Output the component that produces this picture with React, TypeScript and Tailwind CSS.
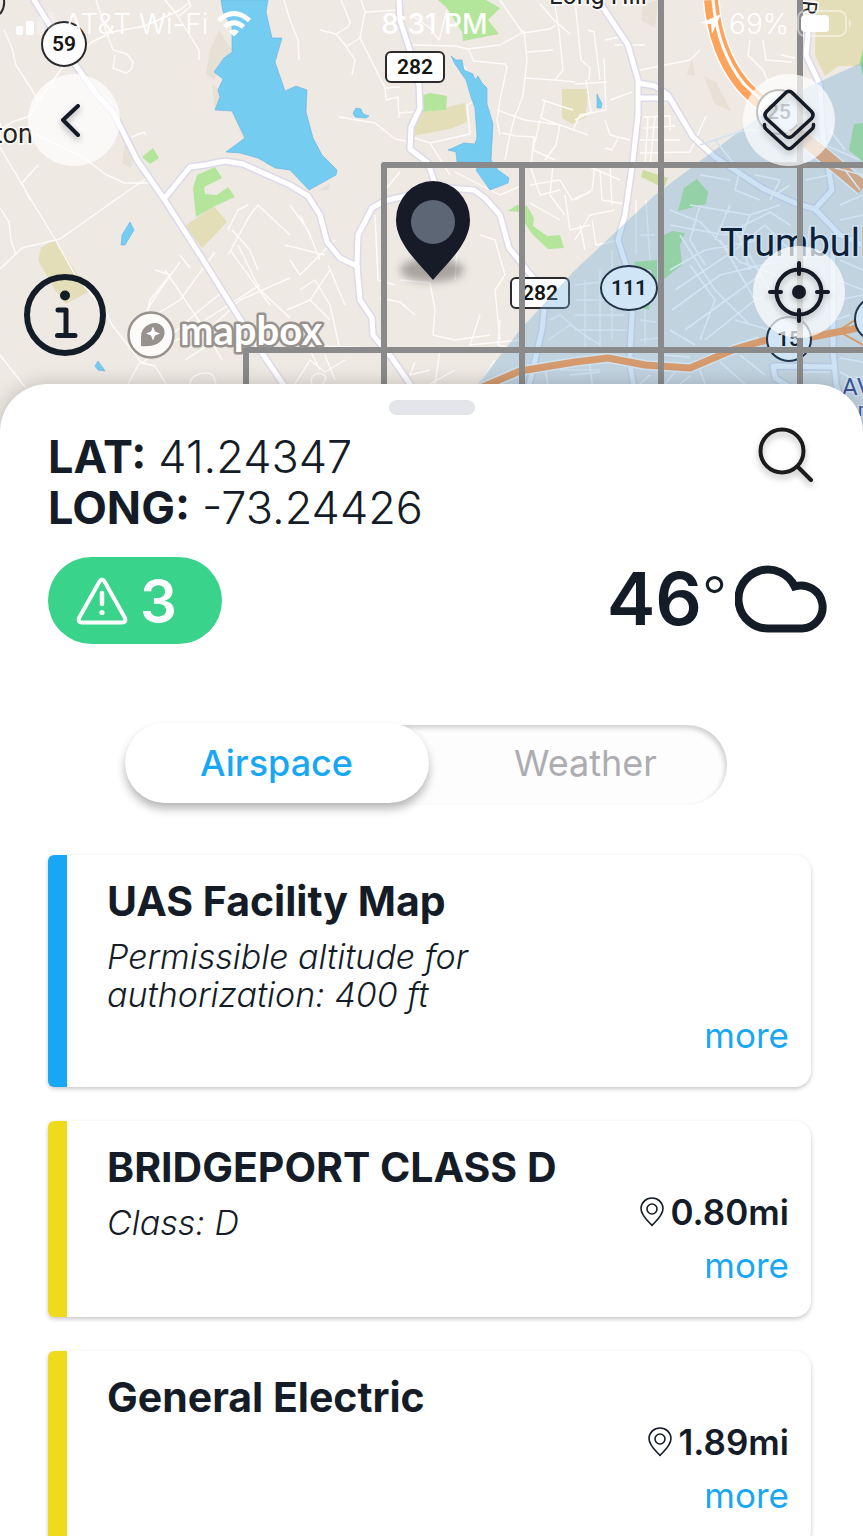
import React from "react";

const MAJOR_ROADS = [
  "M34 0L62 45L77 67L97 95L113 112L137 160L164 199L200 255L250 335L285 387L310 425",
  "M164 199L190 167L205 165L225 161L243 164L290 185L308 196L320 215L327 242L340 258L357 266",
  "M357 266L360 300L372 318L373 335L385 350L392 358L412 387",
  "M357 266L358 235L372 208L384 201L440 188",
  "M399 0L400 20L413 60L419 85L420 108L411 127L410 149L428 163L436 187L474 190L485 198L500 215L509 248L522 264L535 280L544 310L542 330L535 360L528 390",
  "M598 0L628 45L638 80L638 115L633 160L625 215L618 240L625 262L633 300L630 350L630 365L634 387",
  "M638 83L655 86L668 95L693 137L715 157L762 188L795 203L815 209L840 235L863 245",
  "M638 98L668 98",
  "M808 34L806 55L820 85L822 130L832 190L815 209",
  "M833 245L833 350L836 384L845 410",
  "M833 367L773 366L775 378L788 386",
];

const MINOR_ROADS = [
  "M4 30L12 48L16 65L32 90L38 101L30 116L12 122L0 130M38 101L62 68L92 42L112 32L145 26L180 10L190 2M96 0L104 25L113 50L127 54L133 62L131 70L126 73L113 68L115 55M165 0L175 12L199 50L199 60M188 0L191 6L178 17",
  "M35 134L83 157L105 174L124 183L150 183M150 176L115 200L60 239L22 248L0 269M0 208L9 222L11 240L16 255M0 147L30 198L55 239L75 275L105 310L112 325L142 363L155 366L166 384M38 165L22 183L30 200M0 355L25 387M132 137L144 132L146 135",
  "M284 0L290 20L298 40L299 60M341 0L350 22L348 27L336 34L345 45L355 60L352 75M336 34L320 30M361 0L365 12L360 38L347 46M360 38L385 88L400 87M365 12L400 10M385 88L386 100L398 97L399 118M398 113L413 112M339 117L375 123L395 139L412 142M413 45L455 46L468 49L500 45L520 34L524 31M468 49L474 61L505 64L507 67L500 100L497 120L500 135M413 16L430 28L439 40L447 10M500 0L523 33L550 29L556 25M540 4L554 20L570 34M524 31L527 60L523 95L517 112M554 0L559 30L563 70L555 80L575 82M527 52L553 50M525 78L555 80M545 100L541 118L560 125L556 145L545 160",
  "M497 110L525 120L560 125L588 135M502 133L516 136L534 137L531 165M516 112L510 135L505 160M542 100L573 110M540 120L533 150L555 160M459 60L485 95L467 105L470 134L430 143L415 138M430 143L450 175M385 190L400 172M455 172L500 195L523 185",
  "M575 0L581 60L590 68L589 80M605 40L626 36M604 58L606 110L580 115L573 130M586 80L591 112L575 120M588 30L594 32L600 80M607 82L575 84M615 45L645 45M700 50L690 60L640 70M605 120L610 135L630 140M618 138L612 150L605 148M632 92L610 100M643 117L670 116L670 130M648 117L645 165M655 117L650 165M643 128L675 126M640 140L680 140M640 153L690 152L706 116M750 40L748 55L763 70L768 82M763 40L766 60L792 62M781 55L795 58",
  "M290 205L308 230L320 260M285 245L325 255M300 215L312 240M290 260L300 275L335 240M328 265L345 305M300 290L315 280L330 305L340 350M287 310L310 300L330 320M285 325L305 340L320 370M310 300L330 270M299 345L375 348M295 384L310 360L325 372L345 360M312 384C308 375 320 370 325 376C328 384 315 390 312 384M325 355L335 380",
  "M228 255L250 215L258 205L290 235M228 230L238 210L248 205M230 250L270 305M238 245L260 290L290 318M190 348L240 300L290 278M205 320L260 285M165 270L205 330L222 360M180 255L190 268M147 310L160 290L180 262M155 315L180 300L215 252M168 338L200 310L225 290M146 320L150 300L170 275L155 270M185 360L240 325M140 362L128 384M142 363L165 345L200 330M190 384C190 375 205 370 213 375L216 384M232 230L250 250L258 270",
  "M400 225L410 205M400 280L430 283L435 310L433 335L455 340L490 335M380 298L400 302L415 315M455 280L460 210M480 235L495 240L505 275L495 290L500 340M375 215L378 280L395 285M480 315L470 345L520 340M500 320L498 345L518 350M455 370L430 384M495 360L480 384M415 362L410 375L430 370M440 350L435 384",
  "M530 165L540 195L560 190M530 185L560 180L572 200L590 192M553 165L550 195L565 215M565 195L570 230L590 225M530 203L560 220M575 240L590 215L615 210M580 225L585 250M592 220L596 245L620 240M595 165L592 190L575 200M600 170L602 200L630 205M585 165L620 180M610 165L612 205",
  "M575 285L617 280M575 300L620 300M575 315L625 315M575 330L630 330M585 280L585 350M600 270L600 350M612 250L612 340M550 320L560 315L590 340M548 340L570 325L600 345M560 370L600 370M636 200L636 255M646 200L650 260M640 235L655 235M640 340L658 338M640 320L656 322M645 300L645 345",
];

const CITY_STREETS = [
  "M670 225L725 235L770 212L790 225M690 205L750 215L780 205M670 210L700 222L740 262L790 280M680 235L715 290L750 325M670 270L705 250L760 240M675 290L735 250L765 225M672 310L720 275L775 262M685 330L740 290L760 275M705 340L755 300M670 330L695 345M700 205L690 240L705 265M730 205L715 240M750 215L740 240L750 270M765 225L790 250M690 265L715 300L700 340M720 240L755 300M735 230L775 300M735 320L770 330",
  "M740 170L735 190L760 200M755 175L780 180L770 200M790 185L775 195M730 180L700 175M845 170L860 190M840 205L863 195M840 220L863 215M810 225L805 260M840 260L863 270M838 280L863 290M838 300L863 295M835 320L850 315M805 180L830 175M700 145L745 130L790 132M715 140L735 165M830 130L845 150M825 145L860 160M835 168L863 175",
  "M664 355L690 357M675 372L665 384M700 370L705 384M720 362L745 384M740 355L765 375M800 356L800 372L830 372M840 358L863 362M840 372L863 384M680 384L690 376M570 375L600 372M640 384L650 375M545 370L548 384M590 365L592 384M575 350L640 352",
];

const Major = ({ casing, fill }: { casing: string; fill: string }) => (
  <g fill="none" strokeLinejoin="round" strokeLinecap="round">
    {MAJOR_ROADS.map((d) => (
      <path key={d} d={d} stroke={casing} strokeWidth="8" />
    ))}
    {MAJOR_ROADS.map((d) => (
      <path key={d} d={d} stroke={fill} strokeWidth="5" />
    ))}
  </g>
);

const MapCanvas = () => (
  <svg
    className="absolute inset-0 h-full w-full"
    viewBox="0 0 863 432"
    preserveAspectRatio="xMidYMid slice"
    fontFamily='Roboto, "Liberation Sans", sans-serif'
    aria-hidden="true"
  >
    <defs>
      <filter id="pinShadow" x="-50%" y="-50%" width="200%" height="200%">
        <feGaussianBlur stdDeviation="4" />
      </filter>
    </defs>
    <rect width="863" height="432" fill="#efe9e3" />

    <g fill="#e6e0d5">
      <path d="M219 30L232 50L224 60L214 80L206 74L210 50ZM212 84L222 92L215 110ZM232 111L247 138L232 150L243 138ZM126 137L134 150L131 168L122 163ZM704 76L716 82L731 111L715 104ZM692 58L695 76L687 74ZM643 5L658 0L655 28L641 20ZM318 190L330 184L328 190Z" />
    </g>
    <g fill="#b3e59b">
      <path d="M438 0L486 0L500 8L488 20L499 34L463 41L462 32L447 8Z" />
      <path d="M423 95L430 93L447 96L446 110L423 112Z" />
      <path d="M142 157L153 148L159 158L150 164Z" />
      <path d="M197 175L215 167L222 178L204 187L205 194L217 195L228 187L235 197L213 207L196 217L193 188Z" />
      <path d="M508 211L517 205L527 206L534 218L533 226L547 236L560 235L564 248L548 249L532 234L524 222L522 212Z" />
    </g>
    <g fill="#e3deb8">
      <path d="M421 112L446 110L447 107L465 103L467 122L450 129L412 136Z" />
      <path d="M185 226L214 206L227 222L212 238L202 248Z" />
      <path d="M38 260L41 248L55 239L88 292L66 304L55 290Z" />
      <path d="M562 89L588 89L586 117L572 124L562 118Z" />
      <path d="M816 0L863 0L863 66L838 66L825 76L815 55Z" />
      <path d="M643 170L668 178L664 188L641 177Z" fill="#cfdc9f" />
    </g>
    <path d="M863 50L860 62L863 76Z" fill="#8fdc88" />
    <g fill="none" stroke="#fdfcfa" strokeWidth="1.4" strokeLinejoin="round">
      {MINOR_ROADS.map((d) => (
        <path key={d} d={d} />
      ))}
    </g>
    <g fill="#74cdf0" stroke="#68aee8" strokeWidth="0.6">
      <path d="M221 0L223 12L232 27L232 52L224 58L214 72L223 79L218 90L220 97L215 110L232 111L245 138L226 152L240 153L258 158L275 168L290 170L309 190L336 175L337 170L322 155L313 138L306 112L307 90L296 86L285 91L275 62L282 38L272 38L266 12L268 0Z" />
      <path d="M451 56L456 60L462 60L464 70L473 74L475 80L478 76L482 83L487 88L487 104L493 124L491 160L498 170L509 178L508 183L490 190L476 170L480 162L457 162L456 152L448 150L464 143L475 144L477 137L475 108L471 97L466 80L455 64Z" />
      <path d="M353 113L356 108L361 109L363 114L369 116L366 118L355 117Z" />
      <path d="M130 222L134 230L125 245L121 245L122 235Z" />
      <path d="M98 361L105 371L98 370L95 366Z" />
      <path d="M597 94L602 104L601 108L597 108Z" />
    </g>
    <Major casing="#dbd9ea" fill="#ffffff" />
    <path d="M711 0C714 34 724 62 742 84C752 96 765 106 784 122L863 188" fill="none" stroke="#ffffff" strokeWidth="17" />
    <path d="M711 0C714 34 724 62 742 84C752 96 765 106 784 122L863 188" fill="none" stroke="#ffa35c" strokeWidth="14" />
    <path d="M713 0C716 34 726 62 744 84L760 99" fill="none" stroke="#ffffff" strokeWidth="3" />

    <g stroke="#2b2b2d" strokeWidth="2" fill="#ffffff">
      <circle cx="64" cy="44" r="22" />
      <path d="M0 14Q5 8 4 0" fill="none" />
      <rect x="386" y="52" width="58" height="30" rx="5" />
      <rect x="511" y="278" width="58" height="30" rx="5" />
      <circle cx="779" cy="112" r="22" />
    </g>
    <g fontSize="21" fontWeight="600" fill="#151515" textAnchor="middle">
      <text x="64" y="51">59</text>
      <text x="415" y="74">282</text>
      <text x="540" y="300">282</text>
      <text x="779" y="119">25</text>
    </g>
    <g stroke="#ffffff" strokeWidth="3" paintOrder="stroke" fill="#222222">
      <text x="-6" y="143" fontSize="27">ton</text>
      <text x="549" y="4" fontSize="25">Long Hill</text>
      <text x="802" y="0" fontSize="22" transform="rotate(96 802 0)">R</text>
    </g>

    <path d="M863 62L806 88L760 116L712 152L655 195L573 272L520 330L478 384L450 432H863Z" fill="#71acdb" fillOpacity="0.35" />
    <g fill="#95d1a6">
      <path d="M684 188L697 179L708 192L706 204L678 211Z" />
      <path d="M664 235L672 231L685 233L680 245L682 265L664 279Z" />
      <path d="M634 262L657 260L657 290L651 270L636 266Z" />
      <path d="M642 308L650 303L649 310Z" />
      <path d="M863 123L854 124L849 150L863 162Z" />
    </g>
    <g fill="none" stroke="#d2e4f3" strokeWidth="1.6" strokeLinejoin="round">
      {CITY_STREETS.map((d) => (
        <path key={d} d={d} />
      ))}
    </g>
    <path d="M478 389L520 371L575 362L608 358L645 365L690 368L735 349L760 341" fill="none" stroke="#d0e2f0" strokeWidth="10" strokeLinejoin="round" />
    <path d="M478 389L520 371L575 362L608 358L645 365L690 368L735 349L770 339L812 337L858 328" fill="none" stroke="#d59a6d" strokeWidth="7" strokeLinejoin="round" />
    <path d="M812 334L840 332L863 345M835 333L855 320" fill="none" stroke="#d59a6d" strokeWidth="2" />

    <g stroke="#22344a" strokeWidth="2" fill="#d0e5f6">
      <ellipse cx="629" cy="288" rx="28" ry="22" />
      <circle cx="789" cy="339" r="22" />
      <circle cx="877" cy="319" r="22" />
    </g>
    <g fontSize="21" fontWeight="600" fill="#10202e" textAnchor="middle">
      <text x="629" y="295">111</text>
      <text x="789" y="346">15</text>
    </g>
    <g stroke="#cfe2f2" strokeWidth="3" paintOrder="stroke">
      <text x="720" y="256" fontSize="38" fill="#0c2038">Trumbull</text>
      <text x="842" y="395" fontSize="24" fill="#3b5493">AVE</text>
      <text x="858" y="416" fontSize="18" fill="#3b5493">m</text>
    </g>

    <g stroke="#8a8a8b" strokeWidth="6" fill="none" strokeLinejoin="round">
      <path d="M384 432V165H863M246 432V350H863M522 165V432M661 0V432M800 0V432" />
    </g>

    <ellipse cx="432" cy="270" rx="32" ry="12" fill="#000000" fillOpacity="0.3" filter="url(#pinShadow)" />
    <path d="M433 280C420 264 396 244 396 220A37 39 0 0 1 470 220C470 244 446 264 433 280Z" fill="#171a27" />
    <circle cx="433" cy="222" r="22" fill="#5d6675" />
  </svg>
);

const StatusBar = () => (
  <div className="grid h-12 grid-cols-3 items-center pr-2.5 pl-4 text-[28px] text-white">
    <div className="flex items-center gap-2">
      <svg className="h-6 w-10 shrink-0" viewBox="0 0 40 24" fill="white" aria-hidden="true">
        <rect x="0" y="14" width="7" height="9" rx="2" />
        <rect x="10" y="9" width="8" height="14" rx="2" />
        <rect x="21" y="5" width="7" height="18" rx="2" opacity="0.25" />
        <rect x="32" y="0" width="7" height="23" rx="2" opacity="0.25" />
      </svg>
      <span className="font-light whitespace-nowrap">AT&amp;T Wi-Fi</span>
      <svg className="h-7 w-9 shrink-0" viewBox="0 0 36 28" fill="none" stroke="white" strokeWidth="5" aria-label="Wi-Fi">
        <path d="M2.500 10.500Q18 -3.500 33.500 10.500" />
        <path d="M8.500 17Q18 8.500 27.500 17" />
        <path d="M13 21.500Q18 17.500 23 21.500L18 26.500Z" fill="white" stroke="none" />
      </svg>
    </div>
    <span className="text-center font-medium">8:31 PM</span>
    <div className="flex items-center justify-end gap-2">
      <svg className="h-5 w-5" viewBox="0 0 20 20" fill="white" aria-hidden="true">
        <path d="M20 0L11 20L10 10L0 9Z" />
      </svg>
      <span className="font-light">69%</span>
      <svg className="h-7 w-14" viewBox="0 0 56 28" aria-label="Battery">
        <rect x="1" y="1" width="48" height="25" rx="7" fill="none" stroke="white" strokeOpacity="0.45" strokeWidth="2" />
        <rect x="4" y="5" width="28" height="17" rx="4" fill="white" />
        <path d="M52 9Q56 13.500 52 18Z" fill="white" fillOpacity="0.5" />
      </svg>
    </div>
  </div>
);

const RoundButton = ({ label, children }: { label: string; children: React.ReactNode }) => (
  <button
    type="button"
    aria-label={label}
    className="flex size-[92px] items-center justify-center rounded-full bg-white/70 text-[#141a26]"
  >
    {children}
  </button>
);

const MapboxLogo = () => (
  <svg className="h-[50px] w-[200px]" viewBox="0 0 200 50" aria-label="mapbox">
    <circle cx="25" cy="25" r="22.500" fill="#fdfbfa" stroke="#98928e" strokeWidth="2.500" />
    <path d="M15 36V27A13 13 0 0 1 24 14C33 10 41 18 38 26C35 35 25 37 15 36Z" fill="#98928e" />
    <path d="M27 16.500L29 21.500L34 23.500L29 25.500L27 30.500L25 25.500L20 23.500L25 21.500Z" fill="#ffffff" />
    <text
      x="54"
      y="35"
      fontFamily='Lato, "Open Sans", sans-serif'
      fontWeight="700"
      fontSize="40"
      fill="#ffffff"
      stroke="#98928e"
      strokeWidth="5"
      strokeLinejoin="round"
      paintOrder="stroke"
    >
      mapbox
    </text>
  </svg>
);

type Advisory = {
  title: string;
  detail?: string;
  distance?: string;
  stripe: string;
};

const ADVISORIES: Advisory[] = [
  { title: "UAS Facility Map", detail: "Permissible altitude for authorization: 400 ft", stripe: "bg-[#18a7f5]" },
  { title: "BRIDGEPORT CLASS D", detail: "Class: D", distance: "0.80mi", stripe: "bg-[#f0da1c]" },
  { title: "General Electric", distance: "1.89mi", stripe: "bg-[#f0da1c]" },
];

const AdvisoryCard = ({ title, detail, distance, stripe }: Advisory) => (
  <article className="flex min-h-[196px] shrink-0 overflow-hidden rounded-l-md rounded-r-2xl bg-white shadow-[0_2px_4px_rgba(0,0,0,0.22)]">
    <div className={`w-[19px] shrink-0 ${stripe}`} />
    <div className="grid flex-1 pr-[22px] pl-10">
      <div className="col-start-1 row-start-1 pt-5 pb-[73px]">
        <h2 className="text-[41px] leading-[52px] font-bold">{title}</h2>
        {detail && <p className="mt-[11px] max-w-[420px] text-[34px] leading-[38px] font-light italic">{detail}</p>}
      </div>
      <div className="col-start-1 row-start-1 flex flex-col items-end justify-end gap-3 pb-8">
        {distance && (
          <span className="flex items-center gap-1.5 text-[35px] leading-[42px] font-semibold">
            <svg className="h-[30px] w-6" viewBox="0 0 24 30" fill="none" stroke="currentColor" strokeWidth="1.600" aria-hidden="true">
              <path d="M12 28.500C8 24 1 18.500 1 11.500A11 10.500 0 0 1 23 11.500C23 18.500 16 24 12 28.500Z" strokeLinejoin="round" />
              <circle cx="12" cy="12" r="5" />
            </svg>
            {distance}
          </span>
        )}
        <a href="#more" className="text-[35px] leading-10 text-[#18a7f5]">
          more
        </a>
      </div>
    </div>
  </article>
);

export default function App() {
  return (
    <div className='flex h-screen flex-col overflow-hidden bg-white font-["Inter","Liberation_Sans",sans-serif] text-[#141c28]'>
      <header className="relative h-[432px] shrink-0">
        <MapCanvas />
        <div className="relative">
          <StatusBar />
          <div className="flex justify-between px-7 pt-[26px]">
            <RoundButton label="Back">
              <svg className="size-9 drop-shadow-[0_3px_3px_rgba(0,0,0,0.3)]" viewBox="0 0 36 36" fill="none" stroke="currentColor" strokeWidth="4" strokeLinecap="round" strokeLinejoin="round">
                <path d="M22 4L7 18L22 33" />
              </svg>
            </RoundButton>
            <RoundButton label="Map layers">
              <svg className="h-[62px] w-[54px] drop-shadow-[0_3px_3px_rgba(0,0,0,0.25)]" viewBox="0 0 54 62" fill="none" stroke="currentColor" strokeWidth="3.500" strokeLinejoin="round" strokeLinecap="round">
                <path d="M23.500 4Q27 0.500 30.500 4L49.500 22.500Q52.500 26 49.500 29.500L30.500 47Q27 50 23.500 47L4.500 29.500Q1.500 26 4.500 22.500Z" />
                <path d="M2.500 35.500V37Q2.500 39 5 41L23.500 58Q27 61.500 30.500 58L49 41Q51.500 39 51.500 37V35.500" />
              </svg>
            </RoundButton>
          </div>
          <div className="flex items-start justify-between pt-20 pr-[18px] pl-6">
            <div className="mt-6 flex items-center gap-5">
              <button type="button" aria-label="Information">
                <svg className="size-[82px]" viewBox="0 0 82 82" fill="none" stroke="currentColor" aria-hidden="true">
                  <circle cx="41" cy="41" r="38" strokeWidth="6" />
                  <circle cx="41" cy="21.500" r="5" fill="currentColor" stroke="none" />
                  <path d="M34 36H42V61M33.500 61.500H51" strokeWidth="5" strokeLinecap="round" strokeLinejoin="round" />
                </svg>
              </button>
              <a href="#mapbox" className="mt-10 block">
                <MapboxLogo />
              </a>
            </div>
            <RoundButton label="Locate me">
              <svg className="size-[62px] drop-shadow-[0_3px_3px_rgba(0,0,0,0.25)]" viewBox="0 0 62 62" fill="none" stroke="currentColor" strokeWidth="4">
                <circle cx="31" cy="31" r="22.500" />
                <circle cx="31" cy="31" r="7" fill="currentColor" stroke="none" />
                <path d="M31 2V13M31 49V60M2 31H13M49 31H60" strokeLinecap="round" />
              </svg>
            </RoundButton>
          </div>
        </div>
      </header>

      <main className="relative -mt-12 flex flex-1 flex-col rounded-t-[48px] bg-white pt-4 shadow-[0_0_20px_rgba(0,0,0,0.2)]">
        <div className="mx-auto h-[15px] w-[86px] shrink-0 rounded-full bg-[#e4e4eb]" />

        <div className="mt-4 flex justify-between pr-12 pl-12">
          <dl className="text-[45px] leading-[51px]">
            <div className="flex gap-3">
              <dt className="font-bold">LAT:</dt>
              <dd className="font-light">41.24347</dd>
            </div>
            <div className="flex gap-3">
              <dt className="font-bold">LONG:</dt>
              <dd className="font-light">-73.24426</dd>
            </div>
          </dl>
          <button type="button" aria-label="Search" className="-mt-1 self-start">
            <svg className="size-[58px] drop-shadow-[0_4px_3px_rgba(0,0,0,0.25)]" viewBox="0 0 58 58" fill="none" stroke="#1c1c1c" strokeWidth="4">
              <circle cx="25" cy="24" r="21.500" />
              <path d="M41 40L54 53" strokeLinecap="round" />
            </svg>
          </button>
        </div>

        <div className="mt-6 flex items-center justify-between pr-[35px] pl-12">
          <button
            type="button"
            aria-label="3 advisories"
            className="flex h-[87px] w-[174px] items-center gap-3 rounded-full bg-[#3ad38b] pl-7 text-[58px] leading-none font-semibold text-white"
          >
            <svg className="h-12 w-[52px]" viewBox="0 0 52 48" fill="none" stroke="currentColor" strokeWidth="4" strokeLinejoin="round" strokeLinecap="round" aria-hidden="true">
              <path d="M23.500 4.500Q26 0.500 28.500 4.500L49 41Q50.500 45.500 46 45.500H6Q1.500 45.500 3 41Z" />
              <path d="M26 16V27" strokeWidth="4.500" />
              <circle cx="26" cy="35.500" r="2.600" fill="currentColor" stroke="none" />
            </svg>
            3
          </button>
          <div className="flex h-[87px] items-center gap-2 pb-1">
            <span className="flex text-[73px] leading-[82px] font-semibold">
              46<span className="text-[55px] leading-[76px] font-light">°</span>
            </span>
            <svg className="h-[68px] w-[93px]" viewBox="0 0 93 68" fill="none" stroke="currentColor" strokeWidth="8" aria-label="Cloudy">
              <path d="M33.500 63.500A29.500 29.500 0 1 1 59.700 21.500A21.500 21.500 0 1 1 67 63.500Z" />
            </svg>
          </div>
        </div>

        <div className="mt-[81px] flex justify-center pr-3">
          <div role="tablist" className="flex h-20 w-[602px] shrink-0 rounded-full bg-[#fdfdfd] text-[36px] shadow-[inset_-2px_3px_5px_rgba(0,0,0,0.18)]">
            <button
              type="button"
              role="tab"
              aria-selected="true"
              className="-mt-0.5 h-20 w-[304px] rounded-full bg-white font-medium text-[#18a7f5] shadow-[0_6px_10px_rgba(0,0,0,0.28)]"
            >
              Airspace
            </button>
            <button type="button" role="tab" aria-selected="false" className="flex-1 pb-1 pl-4 text-[#acacb1]">
              Weather
            </button>
          </div>
        </div>

        <section className="mt-[50px] flex flex-col gap-[34px] pr-[52px] pl-12">
          {ADVISORIES.map((a) => (
            <AdvisoryCard key={a.title} {...a} />
          ))}
        </section>
      </main>
    </div>
  );
}
